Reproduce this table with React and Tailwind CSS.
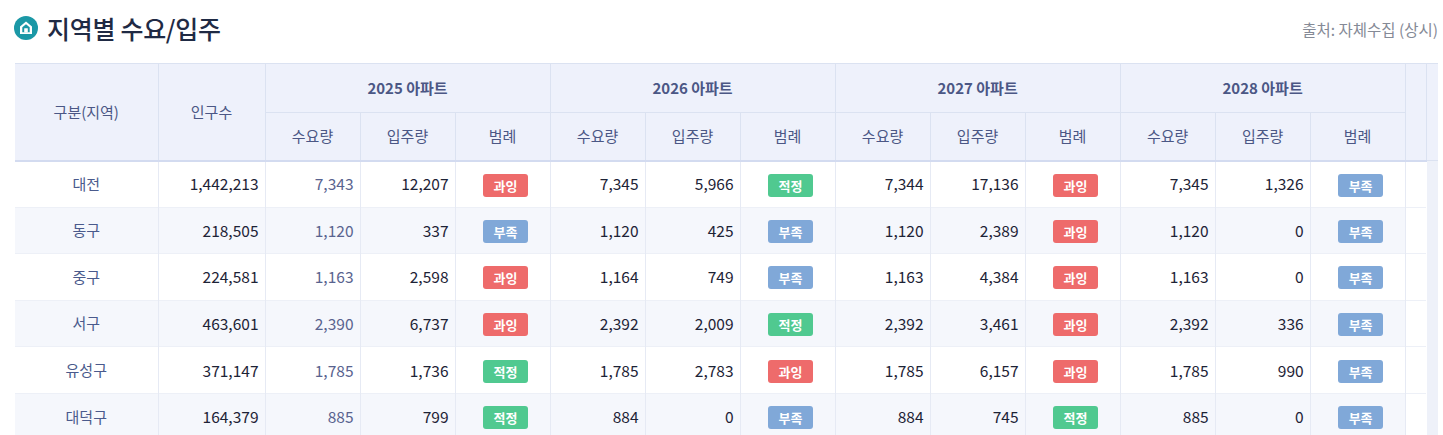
import React from "react";

const rows = [
  ["대전", "1,442,213", ["7,343", "12,207", "과잉"], ["7,345", "5,966", "적정"], ["7,344", "17,136", "과잉"], ["7,345", "1,326", "부족"]],
  ["동구", "218,505", ["1,120", "337", "부족"], ["1,120", "425", "부족"], ["1,120", "2,389", "과잉"], ["1,120", "0", "부족"]],
  ["중구", "224,581", ["1,163", "2,598", "과잉"], ["1,164", "749", "부족"], ["1,163", "4,384", "과잉"], ["1,163", "0", "부족"]],
  ["서구", "463,601", ["2,390", "6,737", "과잉"], ["2,392", "2,009", "적정"], ["2,392", "3,461", "과잉"], ["2,392", "336", "부족"]],
  ["유성구", "371,147", ["1,785", "1,736", "적정"], ["1,785", "2,783", "과잉"], ["1,785", "6,157", "과잉"], ["1,785", "990", "부족"]],
  ["대덕구", "164,379", ["885", "799", "적정"], ["884", "0", "부족"], ["884", "745", "적정"], ["885", "0", "부족"]],
];

function Badge({ v }) {
  const cls =
    v === "과잉"
      ? "bg-[#ee6b6b]"
      : v === "적정"
      ? "bg-[#50c990]"
      : "bg-[#80a8d8]";
  return (
    <span
      className={`inline-flex h-[23px] w-[45px] items-center justify-center rounded-[3px] text-[13px] font-bold leading-none text-white ${cls}`}
    >
      {v}
    </span>
  );
}

function HouseIcon() {
  return (
    <svg width="24" height="24" viewBox="0 0 24 24">
      <circle cx="12" cy="12" r="12" fill="#1b98a6" />
      <path d="M12 5.6 L18 10.4 V18 H6 V10.4 Z" fill="#ffffff" />
      <path d="M8.3 11.2 L12 8.3 L15.7 11.2 V16.2 H8.3 Z" fill="#1b98a6" />
      <rect x="10.2" y="12.2" width="3.6" height="4.2" rx="0.3" fill="#ffffff" />
    </svg>
  );
}

const years = ["2025", "2026", "2027", "2028"];
const th = "border border-[#dbe2f1] font-normal text-[15px] text-[#4b5785]";

export default function App() {
  return (
    <div
      className="h-[435px] w-[1443px] overflow-hidden bg-white"
      style={{ fontFamily: '"Noto Sans CJK KR", "Noto Sans", sans-serif' }}
    >
      <div className="flex h-[63px] items-start justify-between pl-[14px] pr-[5px] pt-[11px]">
        <div className="flex items-center gap-[9px]">
          <HouseIcon />
          <h1 className="text-[25px] font-medium leading-[34px] tracking-[-0.3px] text-[#1f2a44]">
            지역별 수요/입주
          </h1>
        </div>
        <div className="pt-[8px] text-[15.5px] leading-[20px] text-[#858a96]">
          출처: 자체수집 (상시)
        </div>
      </div>

      <div className="ml-[15px] flex w-[1423px]">
        <table className="w-[1411px] table-fixed border-collapse">
          <colgroup>
            <col className="w-[143px]" />
            <col className="w-[107px]" />
            {Array.from({ length: 12 }).map((_, i) => (
              <col key={i} className="w-[95px]" />
            ))}
            <col className="w-[21px]" />
          </colgroup>
          <thead className="bg-[#eef1fb]">
            <tr className="h-[49px]">
              <th rowSpan={2} className={`${th} border-l-0`}>
                구분(지역)
              </th>
              <th rowSpan={2} className={th}>
                인구수
              </th>
              {years.map((y) => (
                <th key={y} colSpan={3} className={`${th} font-semibold text-[#3f4c7a]`}>
                  {y} 아파트
                </th>
              ))}
              <th rowSpan={2} className={th}></th>
            </tr>
            <tr className="h-[48px] border-b-2 border-b-[#d3dbf0]">
              {years.map((y) => (
                <React.Fragment key={y}>
                  <th className={th}>수요량</th>
                  <th className={th}>입주량</th>
                  <th className={th}>범례</th>
                </React.Fragment>
              ))}
            </tr>
          </thead>
          <tbody>
            {rows.map((r, i) => (
              <tr
                key={r[0]}
                className={`h-[46.6px] border-b border-[#edf0f7] ${i % 2 ? "bg-[#f5f7fc]" : "bg-white"}`}
              >
                <td className="border-r border-[#e6eaf4] text-center text-[15px] text-[#4a5a8c]">
                  {r[0]}
                </td>
                <td className="border-r border-[#e6eaf4] pr-[6px] text-right text-[15.5px] text-[#1d2336]">
                  {r[1]}
                </td>
                {r.slice(2).map((g, gi) => (
                  <React.Fragment key={gi}>
                    <td
                      className={`border-r border-[#e6eaf4] pr-[6px] text-right text-[15.5px] ${gi === 0 ? "text-[#59638f]" : "text-[#1d2336]"}`}
                    >
                      {g[0]}
                    </td>
                    <td className="border-r border-[#e6eaf4] pr-[6px] text-right text-[15.5px] text-[#1d2336]">
                      {g[1]}
                    </td>
                    <td className="border-r border-[#e6eaf4] pl-[6px] text-center">
                      <Badge v={g[2]} />
                    </td>
                  </React.Fragment>
                ))}
                <td className="bg-white"></td>
              </tr>
            ))}
          </tbody>
        </table>
        <div className="flex w-[12px] flex-col">
          <div className="h-[98px] border-y border-[#dbe2f1] bg-[#eef1fb]"></div>
          <div className="flex-1 bg-[#eef1f9]"></div>
        </div>
      </div>
    </div>
  );
}
